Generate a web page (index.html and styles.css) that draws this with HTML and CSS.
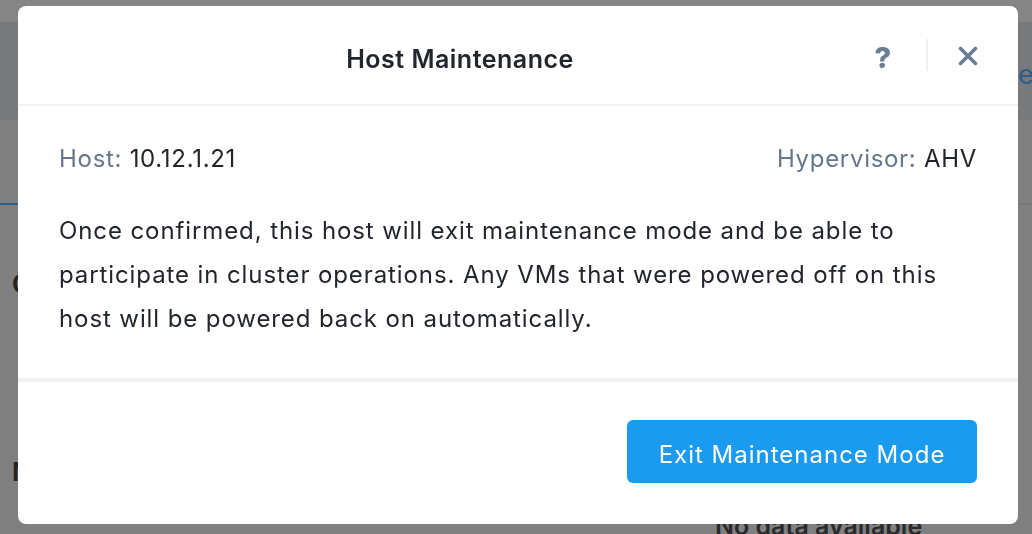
FILE: index.html
```html
<!DOCTYPE html>
<html lang="en">
<head>
<meta charset="utf-8">
<title>Host Maintenance</title>
<link rel="stylesheet" href="styles.css">
</head>
<body>
<div class="page">
  <div class="topstrip"></div>
  <div class="navbar"><span class="nav-link">edit</span></div>
  <div class="tabs"><span class="tab-active"></span></div>
  <div class="content">
    <div class="section-title">Cluster Summary</div>
    <div class="section-title second">Network</div>
    <div class="empty">No data available</div>
  </div>
</div>

<div class="overlay">
  <div class="modal">
    <div class="modal-header">
      <div class="modal-title">Host Maintenance</div>
      <div class="header-actions">
        <button class="icon-btn help" aria-label="Help">?</button>
        <span class="header-sep"></span>
        <button class="icon-btn close" aria-label="Close">
          <svg width="20" height="20" viewBox="0 0 20 20"><path d="M2.5 2.5 L17.5 17.5 M17.5 2.5 L2.5 17.5" stroke="#6b7e93" stroke-width="3.6" stroke-linecap="round" fill="none"/></svg>
        </button>
      </div>
    </div>
    <div class="modal-body">
      <div class="info-row">
        <div class="info"><span class="label">Host:</span> <span class="value">10.12.1.21</span></div>
        <div class="info"><span class="label">Hypervisor:</span> <span class="value">AHV</span></div>
      </div>
      <p class="desc">Once confirmed, this host will exit maintenance mode and be able to participate in cluster operations. Any VMs that were powered off on this host will be powered back on automatically.</p>
    </div>
    <div class="modal-footer">
      <button class="primary-btn">Exit Maintenance Mode</button>
    </div>
  </div>
</div>
</body>
</html>
```

FILE: styles.css
```css
* { box-sizing: border-box; }

html, body {
  margin: 0;
  padding: 0;
  height: 100%;
}

body {
  background: #808080;
  font-family: Inter, "Noto Sans", sans-serif;
  overflow: hidden;
}

/* underlying (dimmed) page */
.page {
  width: 1032px;
}

.topstrip {
  height: 22px;
  background: #858585;
}

.navbar {
  height: 98px;
  background: #78797a;
  display: flex;
  align-items: center;
  padding-left: 1018px;
  overflow: hidden;
  white-space: nowrap;
}

.nav-link {
  color: #2c5d86;
  font-size: 27px;
  margin-top: 6px;
}

.tabs {
  height: 85px;
  border-bottom: 2px solid #777879;
  position: relative;
}

.tab-active {
  position: absolute;
  left: 0;
  bottom: -2px;
  width: 60px;
  height: 2px;
  background: #2c5d86;
}

.content {
  padding: 0 0 0 12px;
  display: flex;
  flex-direction: column;
}

.section-title {
  font-size: 25px;
  font-weight: 700;
  color: #262626;
  margin-top: 64px;
  height: 30px;
  white-space: nowrap;
}

.section-title.second {
  margin-top: 158px;
}

.empty {
  margin-top: 24px;
  margin-left: 703px;
  font-size: 25px;
  font-weight: 600;
  color: #2a2a2a;
  white-space: nowrap;
}

/* modal */
.overlay {
  position: fixed;
  inset: 0;
  padding: 6px 0 0 18px;
}

.modal {
  width: 1000px;
  height: 518px;
  background: #ffffff;
  border-radius: 8px;
  display: flex;
  flex-direction: column;
  overflow: hidden;
}

.modal-header {
  height: 100px;
  border-bottom: 2px solid #f0f1f3;
  display: flex;
  align-items: center;
  padding: 0 32px 0 36px;
  flex-shrink: 0;
}

.modal-title {
  flex: 1;
  text-align: center;
  font-size: 25px;
  font-weight: 600;
  letter-spacing: 0.5px;
  color: #21262c;
  margin-top: 8px;
}

.header-actions {
  display: flex;
  align-items: center;
}

.icon-btn {
  background: none;
  border: 0;
  padding: 0;
  cursor: pointer;
  display: flex;
  align-items: center;
  justify-content: center;
}

.help {
  width: 34px;
  height: 34px;
  font-family: Inter, sans-serif;
  font-size: 29px;
  font-weight: 800;
  color: #6b7e93;
  line-height: 1;
  margin-top: 4px;
}

.header-sep {
  width: 2px;
  height: 32px;
  background: #eef0f2;
  margin: 0 22px 0 26px;
}

.close {
  width: 36px;
  height: 36px;
  margin-top: 2px;
}

.modal-body {
  padding: 38px 41px 0 41px;
  flex: 1;
}

.info-row {
  display: flex;
  justify-content: space-between;
  align-items: center;
  font-size: 24px;
  letter-spacing: 0.7px;
  line-height: 30px;
}

.label {
  color: #65778b;
}

.value {
  color: #21262c;
}

.desc {
  margin: 35px 0 0 0;
  max-width: 900px;
  font-size: 24px;
  letter-spacing: 0.9px;
  line-height: 44px;
  color: #21262c;
}

.modal-footer {
  border-top: 4px solid #f0f1f3;
  height: 146px;
  display: flex;
  justify-content: flex-end;
  align-items: flex-start;
  padding: 38px 41px 0 0;
  flex-shrink: 0;
}

.primary-btn {
  width: 350px;
  height: 63px;
  padding-top: 7px;
  background: #1a9bef;
  border: 0;
  border-radius: 6px;
  color: #ffffff;
  font-family: Inter, "Noto Sans", sans-serif;
  font-size: 24px;
  letter-spacing: 1px;
  cursor: pointer;
}
```
